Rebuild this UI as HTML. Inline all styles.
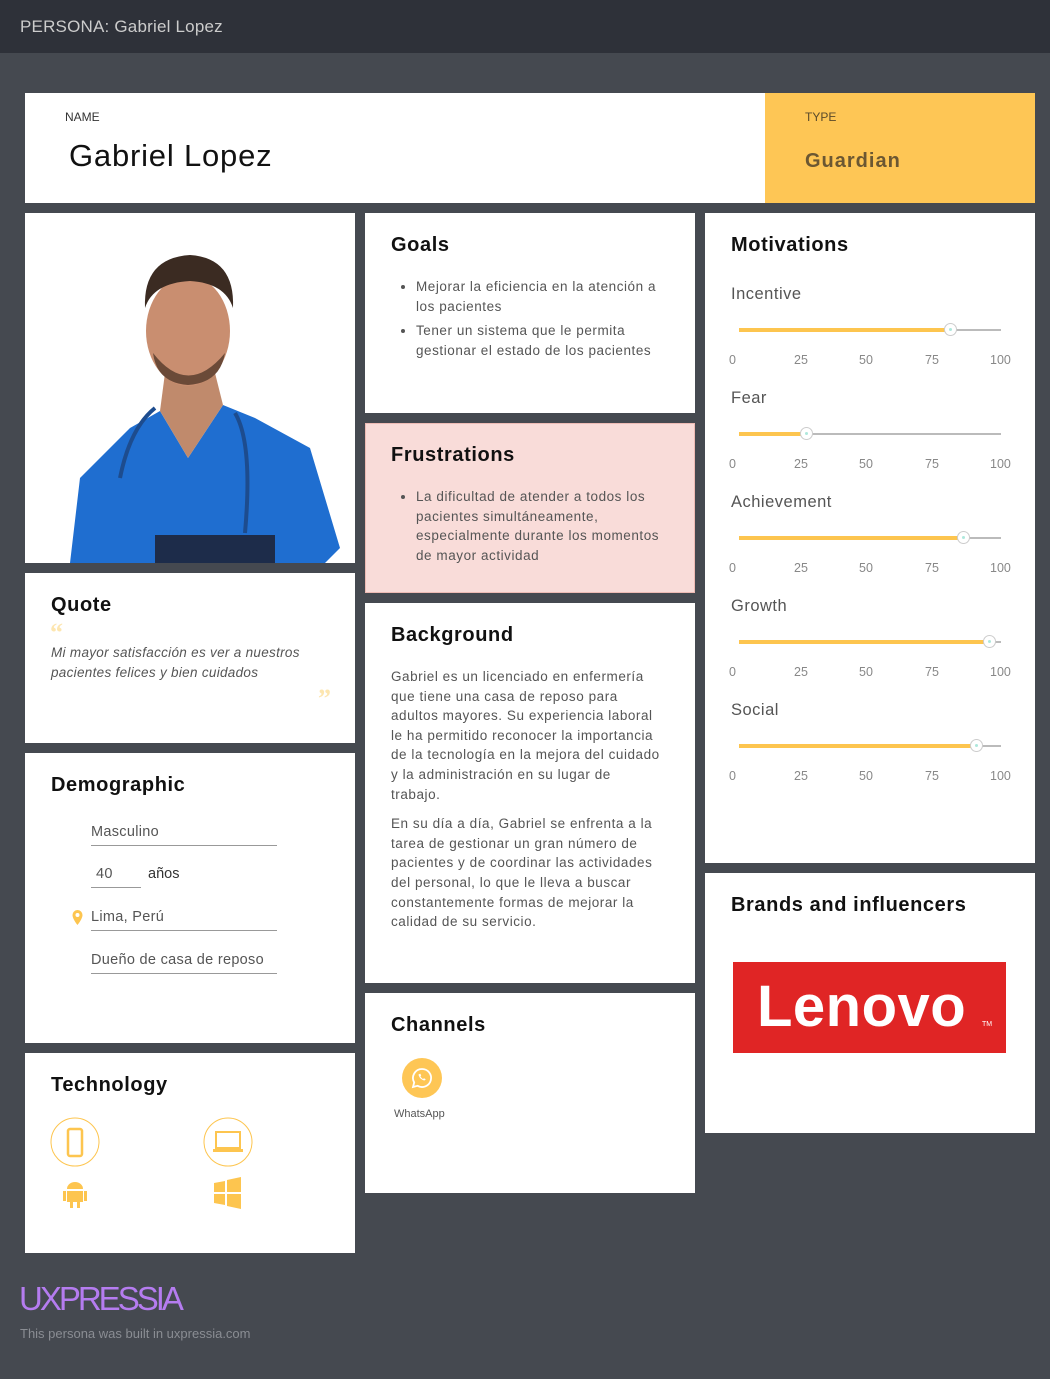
<!DOCTYPE html><html><head><meta charset="utf-8"><style>
*{margin:0;padding:0;box-sizing:border-box}
body{width:1050px;height:1379px;background:#454950;font-family:"Liberation Sans",sans-serif;position:relative;overflow:hidden;color:#222}
.a{position:absolute}
.c{position:absolute;background:#fff}
h2{position:absolute;font-size:20px;font-weight:bold;color:#111;letter-spacing:.6px}
.t{font-size:13.5px;color:#555;line-height:19.6px;letter-spacing:.55px}
ul{padding-left:25px}
li{margin-bottom:5px}
.trk{position:absolute;left:739px;width:262px;height:2px;background:#bbb}
.fill{position:absolute;left:739px;height:4px;background:#fdc54f}
.knob{position:absolute;width:13px;height:13px;border-radius:50%;background:#fff;border:1px solid #ccc}
.knob:after{content:"";position:absolute;left:4px;top:4px;width:3px;height:3px;border-radius:50%;background:#aee8dc}
.lab{position:absolute;left:731px;font-size:16.5px;color:#555;letter-spacing:.5px}
.num{position:absolute;font-size:12.5px;color:#888}
.dl{position:absolute;left:91px;font-size:14.5px;color:#555;border-bottom:1px solid #999;padding-bottom:5px;letter-spacing:.3px}
</style></head><body>
<div class="a" style="left:0;top:0;width:1050px;height:53px;background:#2e3139"></div>
<div class="a" style="left:20px;top:17px;font-size:17px;color:#ccc;letter-spacing:.2px">PERSONA: Gabriel Lopez</div>

<div class="c" style="left:25px;top:93px;width:740px;height:110px"></div>
<div class="a" style="left:65px;top:110px;font-size:12px;color:#333">NAME</div>
<div class="a" style="left:69px;top:138px;font-size:31px;color:#111;letter-spacing:.8px">Gabriel Lopez</div>
<div class="a" style="left:765px;top:93px;width:270px;height:110px;background:#fec655"></div>
<div class="a" style="left:805px;top:110px;font-size:12px;color:#5a4a2a">TYPE</div>
<div class="a" style="left:805px;top:150px;font-size:20px;font-weight:bold;color:#6b5732;letter-spacing:1px">Guardian</div>

<div class="c" style="left:25px;top:213px;width:330px;height:350px;overflow:hidden">
<svg width="330" height="350">
<path d="M45 350 L55 265 L105 215 L135 198 L163 245 L198 192 L230 205 L285 235 L315 335 L300 350Z" fill="#1f6ed0"/>
<path d="M135 198 L163 245 L198 192 L190 160 L140 160Z" fill="#c08a6c"/>
<ellipse cx="163" cy="118" rx="42" ry="55" fill="#c98e70"/>
<path d="M120 95 Q118 45 165 42 Q210 45 208 95 Q200 70 165 68 Q128 70 120 95Z" fill="#3b2b22"/>
<path d="M128 140 Q163 185 200 140 Q195 170 163 172 Q132 170 128 140Z" fill="#6b4a38"/>
<path d="M95 265 Q105 215 130 195 M210 200 Q228 230 220 320" stroke="#1d4c8e" stroke-width="4" fill="none"/>
<rect x="130" y="322" width="120" height="30" fill="#1d2c4a"/>
</svg></div>

<div class="c" style="left:25px;top:573px;width:330px;height:170px"></div>
<h2 style="left:51px;top:594px">Quote</h2>
<div class="a" style="left:50px;top:618px;font-size:26px;color:#fde6b0;font-weight:bold;font-family:'Liberation Serif',serif">“</div>
<div class="a t" style="left:51px;top:643px;font-style:italic;font-size:13.5px;letter-spacing:.3px">Mi mayor satisfacción es ver a nuestros<br>pacientes felices y bien cuidados</div>
<div class="a" style="left:318px;top:684px;font-size:26px;color:#fde6b0;font-weight:bold;font-family:'Liberation Serif',serif">”</div>

<div class="c" style="left:25px;top:753px;width:330px;height:290px"></div>
<h2 style="left:51px;top:774px">Demographic</h2>
<div class="dl" style="top:824px;width:186px">Masculino</div>
<div class="dl" style="top:866px;width:50px;padding-left:5px">40</div>
<div class="a" style="left:148px;top:866px;font-size:14.5px;color:#333">años</div>
<svg class="a" style="left:71px;top:909px" width="13" height="17"><path d="M6.5 1a5 5 0 0 0-5 5c0 4 5 10 5 10s5-6 5-10a5 5 0 0 0-5-5z" fill="#fdc54f"/><circle cx="6.5" cy="6" r="2" fill="#fff"/></svg>
<div class="dl" style="top:909px;width:186px">Lima, Perú</div>
<div class="dl" style="top:952px;width:186px">Dueño de casa de reposo</div>

<div class="c" style="left:25px;top:1053px;width:330px;height:200px"></div>
<h2 style="left:51px;top:1074px">Technology</h2>
<svg class="a" style="left:50px;top:1117px" width="210" height="95">
<circle cx="25" cy="25" r="24" fill="none" stroke="#fdc54f" stroke-width="1"/>
<rect x="18" y="12" width="14" height="27" rx="2" fill="none" stroke="#fdc54f" stroke-width="2.5"/>
<circle cx="178" cy="25" r="24" fill="none" stroke="#fdc54f" stroke-width="1"/>
<rect x="166" y="15" width="24" height="16" fill="none" stroke="#fdc54f" stroke-width="2"/>
<rect x="163" y="32" width="30" height="3" fill="#fdc54f"/>
<path d="M17 72 a8 7 0 0 1 16 0z M17 74 h16 v11 h-16z M13 74 h3 v10 h-3z M34 74 h3 v10 h-3z M20 85 h3 v6 h-3z M27 85 h3 v6 h-3z" fill="#fdc54f"/>
<path d="M164 66 l11-2 v11 h-11z M177 63 l14-3 v15 h-14z M164 77 h11 v11 l-11-2z M177 77 h14 v15 l-14-3z" fill="#fdc54f"/>
</svg>

<div class="c" style="left:365px;top:213px;width:330px;height:200px"></div>
<h2 style="left:391px;top:234px">Goals</h2>
<ul class="a t" style="left:391px;top:277px;width:275px"><li>Mejorar la eficiencia en la atención a los pacientes</li><li>Tener un sistema que le permita gestionar el estado de los pacientes</li></ul>

<div class="a" style="left:365px;top:423px;width:330px;height:170px;background:#f9dcd9;border:1px solid #eebbb5"></div>
<h2 style="left:391px;top:444px">Frustrations</h2>
<ul class="a t" style="left:391px;top:487px;width:270px"><li>La dificultad de atender a todos los pacientes simultáneamente, especialmente durante los momentos de mayor actividad</li></ul>

<div class="c" style="left:365px;top:603px;width:330px;height:380px"></div>
<h2 style="left:391px;top:624px">Background</h2>
<div class="a t" style="left:391px;top:667px;width:272px">Gabriel es un licenciado en enfermería que tiene una casa de reposo para adultos mayores. Su experiencia laboral le ha permitido reconocer la importancia de la tecnología en la mejora del cuidado y la administración en su lugar de trabajo.<div style="height:10px"></div>En su día a día, Gabriel se enfrenta a la tarea de gestionar un gran número de pacientes y de coordinar las actividades del personal, lo que le lleva a buscar constantemente formas de mejorar la calidad de su servicio.</div>

<div class="c" style="left:365px;top:993px;width:330px;height:200px"></div>
<h2 style="left:391px;top:1014px">Channels</h2>
<svg class="a" style="left:402px;top:1058px" width="40" height="40"><circle cx="20" cy="20" r="20" fill="#fec655"/><path d="M20 11a9 9 0 0 0-7.8 13.5L11 29l4.6-1.2A9 9 0 1 0 20 11z" fill="none" stroke="#fff" stroke-width="1.8"/><path d="M16.5 16.5c.5 3 3 5.5 6 6l1.3-1.3-1.8-1-1 .8c-1-.5-2-1.5-2.6-2.6l.8-1-1-1.8z" fill="#fff"/></svg>
<div class="a" style="left:394px;top:1108px;font-size:11px;color:#555">WhatsApp</div>

<div class="c" style="left:705px;top:213px;width:330px;height:650px"></div>
<h2 style="left:731px;top:234px">Motivations</h2>

<div class="lab" style="top:285px">Incentive</div>
<div class="trk" style="top:329px"></div><div class="fill" style="top:328px;width:211px"></div><div class="knob" style="left:944px;top:323px"></div>
<div class="lab" style="top:389px">Fear</div>
<div class="trk" style="top:433px"></div><div class="fill" style="top:432px;width:67px"></div><div class="knob" style="left:800px;top:427px"></div>
<div class="lab" style="top:493px">Achievement</div>
<div class="trk" style="top:537px"></div><div class="fill" style="top:536px;width:224px"></div><div class="knob" style="left:957px;top:531px"></div>
<div class="lab" style="top:597px">Growth</div>
<div class="trk" style="top:641px"></div><div class="fill" style="top:640px;width:250px"></div><div class="knob" style="left:983px;top:635px"></div>
<div class="lab" style="top:701px">Social</div>
<div class="trk" style="top:745px"></div><div class="fill" style="top:744px;width:237px"></div><div class="knob" style="left:970px;top:739px"></div>

<div class="num" style="left:729px;top:353px">0</div><div class="num" style="left:794px;top:353px">25</div><div class="num" style="left:859px;top:353px">50</div><div class="num" style="left:925px;top:353px">75</div><div class="num" style="left:990px;top:353px">100</div>
<div class="num" style="left:729px;top:457px">0</div><div class="num" style="left:794px;top:457px">25</div><div class="num" style="left:859px;top:457px">50</div><div class="num" style="left:925px;top:457px">75</div><div class="num" style="left:990px;top:457px">100</div>
<div class="num" style="left:729px;top:561px">0</div><div class="num" style="left:794px;top:561px">25</div><div class="num" style="left:859px;top:561px">50</div><div class="num" style="left:925px;top:561px">75</div><div class="num" style="left:990px;top:561px">100</div>
<div class="num" style="left:729px;top:665px">0</div><div class="num" style="left:794px;top:665px">25</div><div class="num" style="left:859px;top:665px">50</div><div class="num" style="left:925px;top:665px">75</div><div class="num" style="left:990px;top:665px">100</div>
<div class="num" style="left:729px;top:769px">0</div><div class="num" style="left:794px;top:769px">25</div><div class="num" style="left:859px;top:769px">50</div><div class="num" style="left:925px;top:769px">75</div><div class="num" style="left:990px;top:769px">100</div>

<div class="c" style="left:705px;top:873px;width:330px;height:260px"></div>
<h2 style="left:731px;top:894px">Brands and influencers</h2>
<div class="a" style="left:733px;top:962px;width:273px;height:91px;background:#e02525"></div>
<div class="a" style="left:757px;top:973px;font-size:58px;font-weight:bold;color:#fff;letter-spacing:.5px">Lenovo</div>
<div class="a" style="left:982px;top:1021px;font-size:7px;color:#fff">TM</div>

<div class="a" style="left:19px;top:1280px;font-size:33px;color:#b57cf0;letter-spacing:-3px">UXPRESSIA</div>
<div class="a" style="left:20px;top:1326px;font-size:13px;color:#8a8d93">This persona was built in uxpressia.com</div>
</body></html>
